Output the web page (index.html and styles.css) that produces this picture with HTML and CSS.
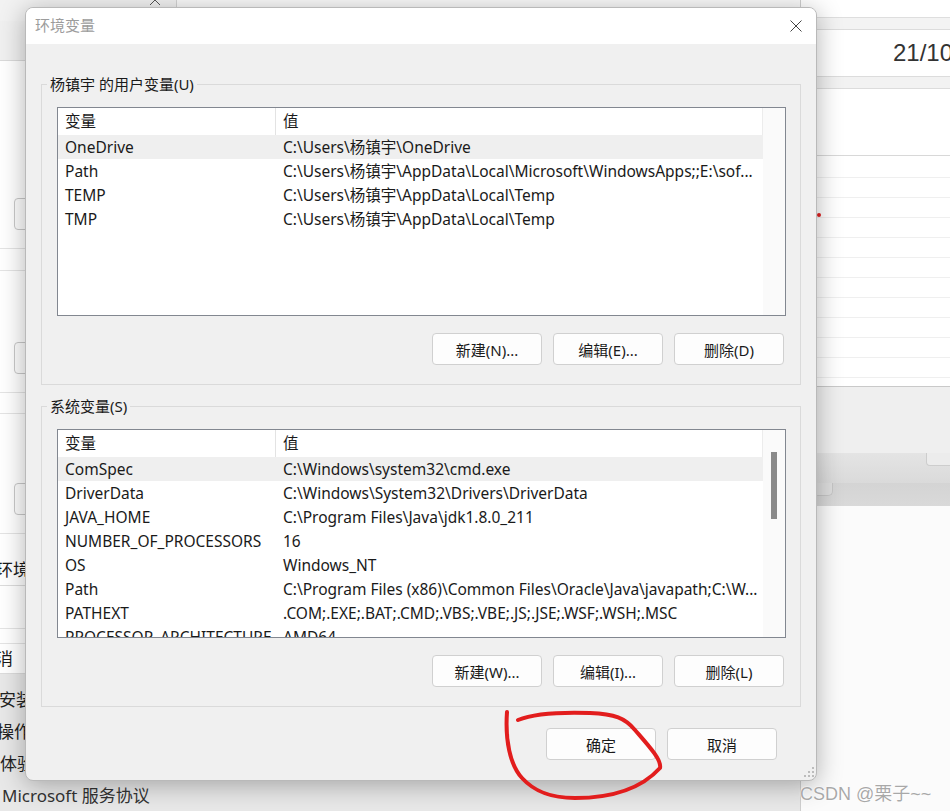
FILE: index.html
```html
<!DOCTYPE html>
<html lang="zh-CN">
<head>
    <meta charset="UTF-8">
    <title>环境变量</title>
    <link rel="stylesheet" href="styles.css">
</head>
<body>
    <div class="desktop">
        <!-- settings window behind the dialog -->
        <div class="win-left">
            <div class="wl-top">
                <div class="wl-tab">
                    <svg class="wl-close" width="12" height="12" viewBox="0 0 12 12"><path d="M1 1L11 11M11 1L1 11" stroke="#555" stroke-width="1"/></svg>
                </div>
            </div>
            <div class="wl-head"></div>
            <div class="wl-card wl-card-1"><div class="wl-btn"></div></div>
            <div class="wl-gap wl-gap-a"></div>
            <div class="wl-card wl-card-2"><div class="wl-btn"></div></div>
            <div class="wl-gap wl-gap-b"></div>
            <div class="wl-card wl-card-3"><div class="wl-btn"></div></div>
            <div class="wl-text wl-text-env">环境</div>
            <div class="wl-gap wl-gap-c"></div>
            <div class="wl-gap wl-gap-d"></div>
            <div class="wl-text wl-text-cancel">取消</div>
            <div class="wl-list">
                <div class="wl-item wl-item-sel">安装</div>
                <div class="wl-item wl-item-ops">操作</div>
                <div class="wl-item">体验</div>
                <div class="wl-item wl-item-ms">Microsoft 服务协议</div>
            </div>
        </div>

        <!-- calendar window on the right -->
        <div class="win-right">
            <div class="wr-top"></div>
            <div class="wr-tabs"></div>
            <div class="wr-date">21/10</div>
            <div class="wr-bar"></div>
            <div class="wr-blank"></div>
            <div class="wr-lines">
                <div class="wr-line wr-line-first"></div>
                <div class="wr-line"></div>
                <div class="wr-line"></div>
                <div class="wr-line"></div>
                <div class="wr-line"></div>
                <div class="wr-line"></div>
                <div class="wr-line"></div>
                <div class="wr-line"></div>
                <div class="wr-line"></div>
                <div class="wr-line"></div>
                <div class="wr-line"></div>
            </div>
            <div class="wr-panel"></div>
            <div class="wr-panel2"><div class="wr-knob"></div></div>
            <div class="wr-panel3"><div class="wr-knob2"></div></div>
            <span class="wr-dot"></span>
        </div>

        <!-- environment variables dialog -->
        <div class="dialog">
            <div class="dlg-title">
                <span class="dlg-caption">环境变量</span>
                <svg class="dlg-close" width="12" height="12" viewBox="0 0 12 12"><path d="M0.5 0.5L11.5 11.5M11.5 0.5L0.5 11.5" stroke="#444" stroke-width="1"/></svg>
            </div>
            <div class="dlg-body">
                <fieldset class="group">
                    <legend>杨镇宇 的用户变量(U)</legend>
                    <div class="list">
                        <div class="list-main">
                            <div class="list-head">
                                <span class="cell cell-name">变量</span>
                                <span class="cell cell-value">值</span>
                            </div>
                            <div class="list-row selected">
                                <span class="cell cell-name">OneDrive</span>
                                <span class="cell cell-value">C:\Users\杨镇宇\OneDrive</span>
                            </div>
                            <div class="list-row">
                                <span class="cell cell-name">Path</span>
                                <span class="cell cell-value">C:\Users\杨镇宇\AppData\Local\Microsoft\WindowsApps;;E:\sof...</span>
                            </div>
                            <div class="list-row">
                                <span class="cell cell-name">TEMP</span>
                                <span class="cell cell-value">C:\Users\杨镇宇\AppData\Local\Temp</span>
                            </div>
                            <div class="list-row">
                                <span class="cell cell-name">TMP</span>
                                <span class="cell cell-value">C:\Users\杨镇宇\AppData\Local\Temp</span>
                            </div>
                        </div>
                        <div class="list-scroll"></div>
                    </div>
                    <div class="btn-row">
                        <button class="btn">新建(N)...</button>
                        <button class="btn">编辑(E)...</button>
                        <button class="btn">删除(D)</button>
                    </div>
                </fieldset>

                <fieldset class="group group-sys">
                    <legend>系统变量(S)</legend>
                    <div class="list">
                        <div class="list-main">
                            <div class="list-head">
                                <span class="cell cell-name">变量</span>
                                <span class="cell cell-value">值</span>
                            </div>
                            <div class="list-row selected">
                                <span class="cell cell-name">ComSpec</span>
                                <span class="cell cell-value">C:\Windows\system32\cmd.exe</span>
                            </div>
                            <div class="list-row">
                                <span class="cell cell-name">DriverData</span>
                                <span class="cell cell-value">C:\Windows\System32\Drivers\DriverData</span>
                            </div>
                            <div class="list-row">
                                <span class="cell cell-name">JAVA_HOME</span>
                                <span class="cell cell-value">C:\Program Files\Java\jdk1.8.0_211</span>
                            </div>
                            <div class="list-row">
                                <span class="cell cell-name">NUMBER_OF_PROCESSORS</span>
                                <span class="cell cell-value">16</span>
                            </div>
                            <div class="list-row">
                                <span class="cell cell-name">OS</span>
                                <span class="cell cell-value">Windows_NT</span>
                            </div>
                            <div class="list-row">
                                <span class="cell cell-name">Path</span>
                                <span class="cell cell-value">C:\Program Files (x86)\Common Files\Oracle\Java\javapath;C:\W...</span>
                            </div>
                            <div class="list-row">
                                <span class="cell cell-name">PATHEXT</span>
                                <span class="cell cell-value">.COM;.EXE;.BAT;.CMD;.VBS;.VBE;.JS;.JSE;.WSF;.WSH;.MSC</span>
                            </div>
                            <div class="list-row">
                                <span class="cell cell-name">PROCESSOR_ARCHITECTURE</span>
                                <span class="cell cell-value">AMD64</span>
                            </div>
                        </div>
                        <div class="list-scroll">
                            <div class="scroll-thumb"></div>
                        </div>
                    </div>
                    <div class="btn-row">
                        <button class="btn">新建(W)...</button>
                        <button class="btn">编辑(I)...</button>
                        <button class="btn">删除(L)</button>
                    </div>
                </fieldset>

                <div class="btn-row dlg-actions">
                    <button class="btn">确定</button>
                    <button class="btn">取消</button>
                </div>
            </div>
            <svg class="grip" width="12" height="12" viewBox="0 0 12 12" fill="#bcbcbc">
                <rect x="9" y="0" width="2" height="2"/>
                <rect x="5" y="4" width="2" height="2"/>
                <rect x="9" y="4" width="2" height="2"/>
                <rect x="1" y="8" width="2" height="2"/>
                <rect x="5" y="8" width="2" height="2"/>
                <rect x="9" y="8" width="2" height="2"/>
            </svg>
        </div>

        <!-- hand-drawn mark around the OK button -->
        <svg class="scribble" width="170" height="100" viewBox="0 0 170 100">
            <path d="M7 7 C5 35 10 60 22 73 C33 85 48 93 75 93 C110 93 140 85 160 63 C162 55 148 40 135 25 C125 13 115 9 90 8 C60 7 35 8 18 15" fill="none" stroke="#e21d1d" stroke-width="4" stroke-linecap="round" stroke-linejoin="round"/>
        </svg>

        <div class="watermark">CSDN @栗子~~</div>
    </div>
</body>
</html>
```

FILE: styles.css
```css
:root {
    --ui-font: "Noto Sans", "Noto Sans CJK SC", sans-serif;
    --text-color: #1a1a1a;
    --face: #f0f0f0;
    --group-line: #dadada;
    --list-border: #828790;
    --row-selected: #efefef;
}

body {
    margin: 0;
    font-family: var(--ui-font);
    color: var(--text-color);
}

.desktop {
    position: relative;
    width: 950px;
    height: 811px;
    overflow: hidden;
    background: #fafafa;
}

/* ---------- window behind, left ---------- */

.win-left {
    position: absolute;
    left: 0;
    top: 0;
    width: 800px;
    height: 811px;
    background: #fff;
    display: flex;
    flex-direction: column;
}

.wl-top {
    height: 21px;
    flex: none;
    background: #fafafa;
    display: flex;
}

.wl-tab {
    width: 177px;
    border-right: 1px solid #d4d4d4;
    background: #f2f2f2;
    display: flex;
    justify-content: flex-end;
    padding-right: 15px;
    box-sizing: border-box;
}

.wl-close {
    margin-top: -6px;
}

.wl-head {
    height: 39px;
    flex: none;
    background: #f0f0f0;
    border-bottom: 1px solid #dadada;
}

.wl-card {
    flex: none;
    box-sizing: border-box;
    border-bottom: 1px solid #e4e4e4;
}

.wl-card-1 { height: 188px; padding-top: 137px; }
.wl-card-2 { height: 122px; padding-top: 71px; }
.wl-card-3 { height: 120px; padding-top: 69px; }

.wl-btn {
    margin-left: 14px;
    width: 60px;
    height: 32px;
    box-sizing: border-box;
    border: 1px solid #c9c9c9;
    border-radius: 4px;
    background: #fdfdfd;
}

.wl-gap {
    flex: none;
    box-sizing: border-box;
    border-bottom: 1px solid #e4e4e4;
}

.wl-gap-a { height: 22px; }
.wl-gap-b { height: 21px; }
.wl-gap-c { height: 43px; }
.wl-gap-d { height: 15px; }

.wl-text {
    flex: none;
    box-sizing: border-box;
    border-bottom: 1px solid #dcdcdc;
    font-size: 17px;
    white-space: nowrap;
}

.wl-text-env {
    height: 52px;
    padding-top: 24px;
    line-height: 24px;
    margin-left: -4px;
}

.wl-text-cancel {
    height: 30px;
    line-height: 29px;
    margin-left: -21px;
}

.wl-list {
    flex: 1;
    background: #e8e8e8;
    padding-top: 10px;
}

.wl-item {
    height: 32px;
    line-height: 32px;
    font-size: 17px;
    color: #222;
    white-space: nowrap;
}

.wl-item-sel { margin-left: -1px; }
.wl-item-ops { margin-left: -3px; }
.wl-item-ms { margin-left: 2px; color: #333; }

/* ---------- window behind, right ---------- */

.win-right {
    position: absolute;
    left: 800px;
    top: 0;
    width: 150px;
    height: 811px;
    background: #fbfbfb;
    border-left: 1px solid #cfcfcf;
    box-sizing: border-box;
    display: flex;
    flex-direction: column;
}

.wr-top {
    height: 18px;
    flex: none;
    background: #fff;
    border-bottom: 1px solid #dedede;
    box-sizing: border-box;
}

.wr-tabs {
    height: 12px;
    flex: none;
    background: #f3f3f3;
    border-bottom: 1px solid #dcdcdc;
    box-sizing: border-box;
}

.wr-date {
    height: 46px;
    flex: none;
    background: #fff;
    line-height: 46px;
    padding-left: 92px;
    font-family: "Liberation Sans", sans-serif;
    font-size: 24px;
    color: #333;
    white-space: nowrap;
}

.wr-bar {
    height: 13px;
    flex: none;
    background: #f2f2f2;
    border-top: 1px solid #dcdcdc;
    border-bottom: 1px solid #dcdcdc;
    box-sizing: border-box;
}

.wr-blank {
    height: 67px;
    flex: none;
    background: #fff;
    border-bottom: 1px solid #d8d8d8;
    box-sizing: border-box;
}

.wr-lines {
    height: 231px;
    flex: none;
    background: #fff;
    border-bottom: 1px solid #c9c9c9;
    box-sizing: border-box;
}

.wr-line {
    height: 20px;
    border-bottom: 1px solid #efefef;
    box-sizing: border-box;
}

.wr-line-first {
    height: 22px;
}

.wr-panel {
    height: 66px;
    flex: none;
    background: #efefef;
}

.wr-panel2 {
    height: 30px;
    flex: none;
    background: linear-gradient(#e4e4e4, #dadada);
}

.wr-knob {
    margin-left: 125px;
    width: 40px;
    height: 13px;
    box-sizing: border-box;
    border: 1px solid #cdcdcd;
    border-top: none;
    border-radius: 0 0 4px 4px;
    background: #ececec;
}

.wr-panel3 {
    height: 23px;
    flex: none;
    background: linear-gradient(#d4d4d4, #d9d9d9);
}

.wr-knob2 {
    margin-left: 12px;
    width: 20px;
    height: 13px;
    box-sizing: border-box;
    border: 1px solid #c6c6c6;
    border-top: none;
    border-radius: 0 0 5px 5px;
    background: #dedede;
}

.wr-dot {
    position: absolute;
    left: 16px;
    top: 213px;
    width: 4px;
    height: 4px;
    border-radius: 50%;
    background: #e02020;
}

/* ---------- dialog ---------- */

.dialog {
    position: absolute;
    left: 25px;
    top: 7px;
    width: 792px;
    height: 774px;
    box-sizing: border-box;
    border: 1px solid #b9b9b9;
    border-radius: 8px;
    overflow: hidden;
    background: var(--face);
    box-shadow: 0 4px 26px rgba(0, 0, 0, 0.3);
    display: flex;
    flex-direction: column;
}

.dlg-title {
    height: 36px;
    flex: none;
    background: #fff;
    display: flex;
    align-items: center;
    justify-content: space-between;
    padding: 0 14px 3px 9px;
    box-sizing: border-box;
}

.dlg-caption {
    font-size: 15px;
    color: #9c9c9c;
}

.dlg-close {
    margin-top: 2px;
}

.dlg-body {
    flex: 1;
    padding: 30px 15px 0;
    font-size: 15px;
}

.group {
    margin: 0;
    padding: 13px 14px 19px 15px;
    border: 1px solid var(--group-line);
    min-width: 0;
}

.group-sys {
    margin-top: 11px;
}

.group legend {
    padding: 0 3px;
    margin-left: -10px;
    line-height: 20px;
    font-size: 15px;
}

.list {
    height: 209px;
    box-sizing: border-box;
    border: 1px solid var(--list-border);
    background: #fff;
    display: flex;
    overflow: hidden;
}

.list-main {
    flex: 1;
    min-width: 0;
}

.list-scroll {
    width: 22px;
    flex: none;
    background: #fafafa;
    padding: 22px 0 0 8px;
    box-sizing: border-box;
}

.scroll-thumb {
    width: 6px;
    height: 67px;
    background: #8a8a8a;
}

.list-head,
.list-row {
    display: flex;
    white-space: nowrap;
    font-size: 15.5px;
}

.list-head {
    height: 27px;
    line-height: 27px;
    border-right: 1px solid #ececec;
}

.list-head .cell-name {
    border-right: 1px solid #e3e3e3;
}

.list-row {
    height: 24px;
    line-height: 24px;
}

.list-row.selected {
    background: var(--row-selected);
}

.cell {
    overflow: hidden;
    padding-left: 7px;
    box-sizing: border-box;
}

.cell-name {
    width: 218px;
    flex: none;
}

.cell-value {
    flex: 1;
    min-width: 0;
}

.btn-row {
    display: flex;
    justify-content: flex-end;
    gap: 11px;
    margin-top: 17px;
    padding-right: 2px;
}

.btn {
    width: 110px;
    height: 32px;
    padding: 0;
    box-sizing: border-box;
    border: 1px solid #d0d0d0;
    border-radius: 4px;
    background: #fdfdfd;
    font-family: var(--ui-font);
    font-size: 15px;
    color: var(--text-color);
}

.dlg-actions {
    margin-top: 21px;
    padding-right: 24px;
}

.grip {
    position: absolute;
    right: 1px;
    bottom: 1px;
}

/* ---------- overlays ---------- */

.scribble {
    position: absolute;
    left: 500px;
    top: 705px;
    pointer-events: none;
}

.watermark {
    position: absolute;
    left: 800px;
    top: 779px;
    font-family: "Liberation Sans", "Noto Sans CJK SC", sans-serif;
    font-size: 18px;
    color: rgba(110, 110, 110, 0.6);
    text-shadow: 0 0 1px #fff, 0 0 2px #fff;
    white-space: nowrap;
}
```
